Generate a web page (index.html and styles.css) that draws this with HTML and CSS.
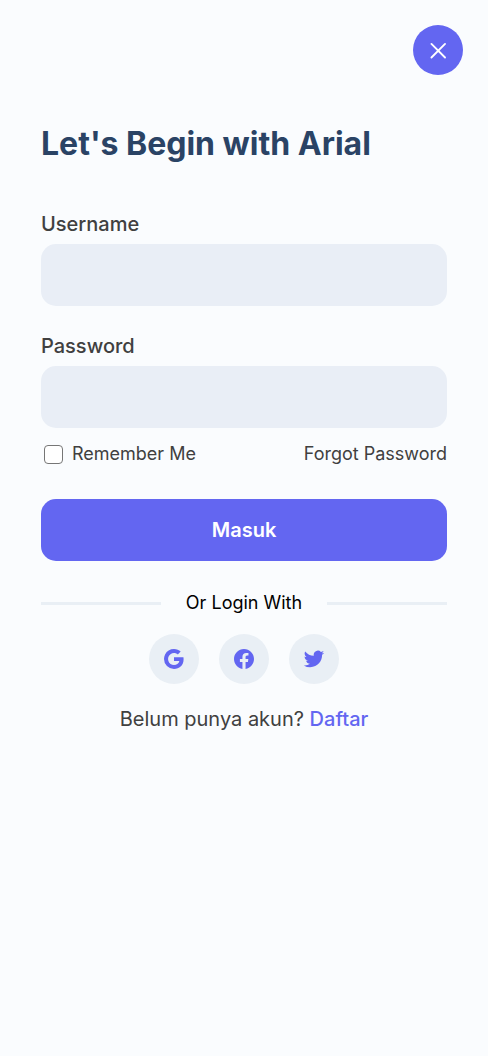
FILE: index.html
```html
<!DOCTYPE html>
<html lang="id">
<head>
<meta charset="utf-8">
<meta name="viewport" content="width=device-width, initial-scale=1">
<title>Login</title>
<link rel="stylesheet" href="styles.css">
</head>
<body>
<header class="topbar">
  <button class="close" type="button" aria-label="Close">
    <svg width="30" height="30" viewBox="0 0 512 512" fill="none" stroke="currentColor" stroke-width="32" stroke-linecap="round"><path d="M376 384 144 152M376 152 144 384"/></svg>
  </button>
</header>
<main class="login">
  <h1 class="title">Let's Begin with Arial</h1>
  <form class="form">
    <label class="label" for="username">Username</label>
    <input class="field" id="username" type="text">
    <label class="label" for="password">Password</label>
    <input class="field field-last" id="password" type="password">
    <div class="options">
      <label class="remember" for="remember"><input class="check" id="remember" type="checkbox">Remember Me</label>
      <a class="forgot" href="#">Forgot Password</a>
    </div>
    <button class="submit" type="submit">Masuk</button>
  </form>
  <div class="divider"><span class="divider-text">Or Login With</span></div>
  <div class="socials">
    <button class="social" type="button" aria-label="Google">
      <svg width="24" height="24" viewBox="0 0 24 24" fill="currentColor"><path d="M3.064 7.51A9.996 9.996 0 0 1 12 2c2.695 0 4.959.99 6.69 2.605l-2.867 2.868C14.786 6.482 13.468 5.977 12 5.977c-2.605 0-4.81 1.76-5.595 4.123-.2.6-.314 1.24-.314 1.9 0 .66.114 1.3.314 1.9.786 2.364 2.99 4.123 5.595 4.123 1.345 0 2.49-.355 3.386-.955a4.6 4.6 0 0 0 1.996-3.018H12v-3.868h9.418c.118.654.182 1.336.182 2.045 0 3.046-1.09 5.61-2.982 7.35C16.964 21.105 14.7 22 12 22A9.996 9.996 0 0 1 2 12c0-1.614.386-3.14 1.064-4.49z"/></svg>
    </button>
    <button class="social" type="button" aria-label="Facebook">
      <svg width="24" height="24" viewBox="0 0 24 24" fill="currentColor"><path d="M22 12c0-5.523-4.477-10-10-10S2 6.477 2 12c0 4.991 3.657 9.128 8.438 9.879V14.89h-2.54V12h2.54V9.797c0-2.506 1.492-3.89 3.777-3.89 1.094 0 2.238.195 2.238.195v2.46h-1.26c-1.243 0-1.63.771-1.63 1.562V12h2.773l-.443 2.89h-2.33v6.989C18.343 21.129 22 16.99 22 12z"/></svg>
    </button>
    <button class="social" type="button" aria-label="Twitter">
      <svg width="24" height="24" viewBox="0 0 24 24" fill="currentColor"><path d="M22.162 5.656a8.384 8.384 0 0 1-2.402.658A4.196 4.196 0 0 0 21.6 4c-.82.488-1.719.83-2.656 1.015a4.182 4.182 0 0 0-7.126 3.814 11.874 11.874 0 0 1-8.62-4.37 4.168 4.168 0 0 0-.566 2.103c0 1.45.738 2.731 1.86 3.481a4.168 4.168 0 0 1-1.894-.523v.052a4.185 4.185 0 0 0 3.355 4.101 4.21 4.21 0 0 1-1.89.072A4.185 4.185 0 0 0 7.97 16.65a8.394 8.394 0 0 1-6.191 1.732 11.83 11.83 0 0 0 6.41 1.88c7.693 0 11.9-6.373 11.9-11.9 0-.18-.005-.362-.013-.54a8.496 8.496 0 0 0 2.087-2.165z"/></svg>
    </button>
  </div>
  <p class="signup">Belum punya akun? <a class="signup-link" href="#">Daftar</a></p>
</main>
</body>
</html>
```
FILE: styles.css
```css
* { box-sizing: border-box; }
body {
  margin: 0;
  background: #fafcfe;
  color: #404040;
  font-family: Inter, sans-serif;
}
a { color: inherit; text-decoration: none; }
button { border: 0; padding: 0; font: inherit; cursor: pointer; }
svg { display: block; }
.topbar { display: flex; justify-content: flex-end; padding: 25px 25px 0; }
.close, .social {
  display: grid;
  place-items: center;
  width: 50px;
  height: 50px;
  border-radius: 50%;
}
.close { background: #6366f1; color: #fff; }
.login { padding: 47px 41px; }
.title {
  margin: 0 0 46px;
  color: #2a4365;
  font-size: 32px;
  line-height: 44px;
  font-weight: 700;
}
.form { display: flex; flex-direction: column; }
.label { margin-bottom: 8px; font-size: 20px; line-height: 24px; font-weight: 500; }
.field {
  width: 100%;
  height: 62px;
  margin-bottom: 28px;
  padding: 0 20px;
  border: 0;
  border-radius: 15px;
  background: #e9eef6;
  font: inherit;
  font-size: 20px;
}
.field-last { margin-bottom: 14px; }
.options {
  display: flex;
  justify-content: space-between;
  align-items: center;
  margin-bottom: 33px;
  font-size: 18px;
  line-height: 24px;
}
.remember { display: flex; align-items: center; }
.check {
  appearance: none;
  width: 19px;
  height: 19px;
  margin: 0 9px 0 3px;
  border: 1px solid #767676;
  border-radius: 4px;
  background: #fff;
}
.check:checked { border-color: #6366f1; background: #6366f1; }
.submit {
  height: 62px;
  border-radius: 15px;
  background: #6366f1;
  color: #fff;
  font-size: 20px;
  font-weight: 600;
}
.divider {
  display: flex;
  align-items: center;
  gap: 25px;
  margin: 30px 0 19px;
  color: #000;
  font-size: 18px;
  line-height: 24px;
}
.divider::before, .divider::after { content: ""; flex: 1; height: 3px; background: #e9eff5; }
.socials { display: flex; justify-content: center; gap: 20px; }
.social { background: #e9eff5; color: #6366f1; }
.signup { margin: 23px 0 0; text-align: center; font-size: 20px; line-height: 24px; }
.signup-link { color: #6366f1; font-weight: 500; }
```
